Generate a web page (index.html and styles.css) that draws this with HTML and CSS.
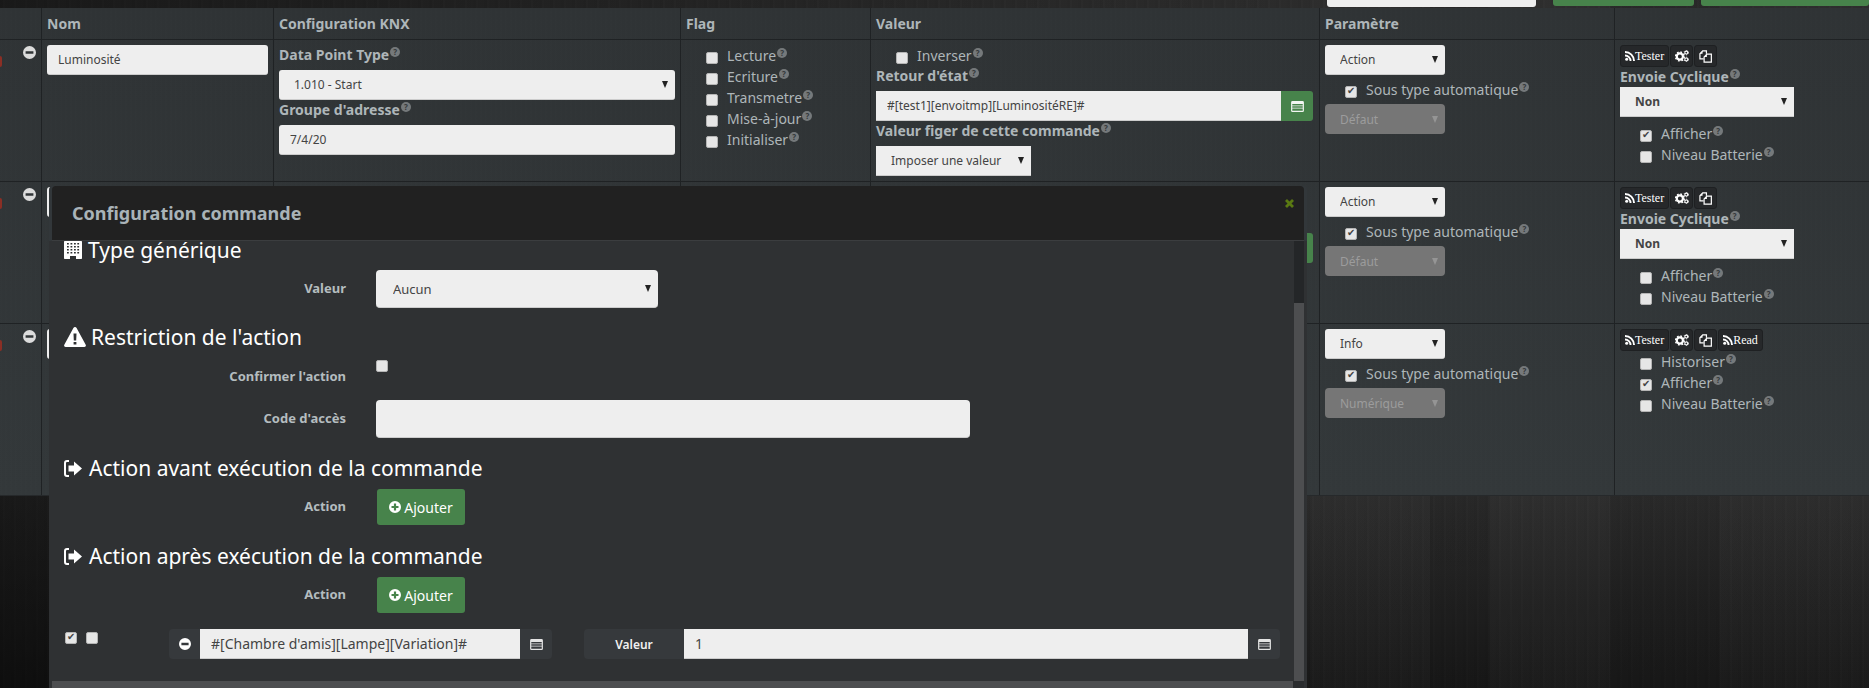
FILE: index.html
```html
<!DOCTYPE html>
<html lang="fr">
<head>
<meta charset="utf-8">
<title>Configuration commande</title>
<link rel="stylesheet" href="styles.css">
</head>
<body>
<svg class="sprite" xmlns="http://www.w3.org/2000/svg">
  <symbol id="i-minus" viewBox="0 0 12 12"><path fill-rule="evenodd" d="M6 0a6 6 0 1 0 0 12A6 6 0 0 0 6 0zM2.4 4.8h7.2v2.4H2.4z"/></symbol>
  <symbol id="i-plus" viewBox="0 0 12 12"><path fill-rule="evenodd" d="M6 0a6 6 0 1 0 0 12A6 6 0 0 0 6 0zM4.9 2.5h2.2v2.4h2.4v2.2H7.100v2.400H4.900V7.100H2.500V4.900h2.400z"/></symbol>
  <symbol id="i-list" viewBox="0 0 14 12"><path fill-rule="evenodd" d="M1.500 0h11A1.500 1.500 0 0 1 14 1.500v9a1.500 1.500 0 0 1-1.500 1.500h-11A1.500 1.500 0 0 1 0 10.500v-9A1.500 1.500 0 0 1 1.500 0zM1.300 3.200v1.600h11.400V3.200zM1.300 5.800v1.500h11.400V5.800zM1.300 8.300v2.200h11.400V8.300z"/></symbol>
  <symbol id="i-rss" viewBox="0 0 12 12"><circle cx="2" cy="10" r="1.800"/><path d="M0 4.200v2.300a5.500 5.500 0 0 1 5.500 5.500h2.300A7.800 7.800 0 0 0 0 4.200z"/><path d="M0 0v2.300A9.700 9.700 0 0 1 9.700 12H12A12 12 0 0 0 0 0z"/></symbol>
  <symbol id="i-cogs" viewBox="0 0 16 14"><circle cx="5.500" cy="7.500" r="3.600" fill="none" stroke="currentColor" stroke-width="2.600"/><circle cx="5.500" cy="7.500" r="5.200" fill="none" stroke="currentColor" stroke-width="1.700" stroke-dasharray="2 2.080"/><circle cx="13" cy="3" r="1.700" fill="none" stroke="currentColor" stroke-width="1.300"/><circle cx="13" cy="3" r="2.600" fill="none" stroke="currentColor" stroke-width="1" stroke-dasharray="1.300 1.420"/><circle cx="13" cy="11" r="1.700" fill="none" stroke="currentColor" stroke-width="1.300"/><circle cx="13" cy="11" r="2.600" fill="none" stroke="currentColor" stroke-width="1" stroke-dasharray="1.300 1.420"/></symbol>
  <symbol id="i-copy" viewBox="0 0 14 14"><path fill="none" stroke="currentColor" stroke-width="1.300" d="M5 9.500H1V4l3-3h4v3"/><path fill="none" stroke="currentColor" stroke-width="1.300" d="M5.500 13V7.500l3-3h4.800V13z"/><path fill="currentColor" d="M3.800 1v3H1zM8.500 4.500v3h-3z"/></symbol>
  <symbol id="i-warning" viewBox="0 0 22 20"><path fill-rule="evenodd" d="M11 0c.7 0 1.200.4 1.600 1l9.100 16.800c.6 1.100-.1 2.200-1.300 2.200H1.600C.4 20-.3 18.900.3 17.800L9.400 1C9.800.4 10.300 0 11 0zM9.500 6.500l.3 7h2.400l.3-7zM9.600 15v2.500h2.800V15z"/></symbol>
  <symbol id="i-building" viewBox="0 0 18 18"><path fill-rule="evenodd" d="M.7 0h16.600a.7.7 0 0 1 .7.700v16.600a.7.7 0 0 1-.7.700H12v-3H6v3H.7a.7.7 0 0 1-.7-.7V.7A.7.7 0 0 1 .7 0zM3 2v1.600h1.800V2zM6.500 2v1.600h1.800V2zM10 2v1.600h1.800V2zM13.300 2v1.600h1.800V2zM3 5v1.600h1.800V5zM6.500 5v1.600h1.800V5zM10 5v1.600h1.800V5zM13.300 5v1.600h1.800V5zM3 8v1.600h1.800V8zM6.500 8v1.600h1.800V8zM10 8v1.600h1.800V8zM13.300 8v1.600h1.800V8zM3 11v1.600h1.800V11zM6.500 11v1.600h1.800V11zM10 11v1.600h1.800V11zM13.300 11v1.600h1.800V11z"/></symbol>
  <symbol id="i-signin" viewBox="0 0 18 17"><path d="M5 0v2H3a1 1 0 0 0-1 1v11a1 1 0 0 0 1 1h2v2H3a3 3 0 0 1-3-3V3a3 3 0 0 1 3-3z"/><path d="M10 1.500l8 7-8 7v-4H4.500v-6H10z"/></symbol>
  <symbol id="i-times" viewBox="0 0 10 10"><path d="M2.200 0L5 2.800 7.800 0 10 2.200 7.200 5 10 7.800 7.800 10 5 7.200 2.200 10 0 7.800 2.800 5 0 2.200z"/></symbol>
</svg>

<div class="topstrip">
  <input class="top-input" type="text" aria-label="Recherche">
  <span class="top-btn top-btn-a"></span>
  <span class="top-btn top-btn-b"></span>
</div>

<div class="cmd-table">
  <div class="row head">
    <div class="cell"></div>
    <div class="cell">Nom</div>
    <div class="cell">Configuration KNX</div>
    <div class="cell">Flag</div>
    <div class="cell">Valeur</div>
    <div class="cell">Paramètre</div>
    <div class="cell"></div>
  </div>

  <div class="row row-std">
    <div class="cell cell-ctl"><span class="grip"></span><svg class="ic-remove"><use href="#i-minus"/></svg></div>
    <div class="cell"><input class="field" type="text" value="Luminosité"></div>
    <div class="cell">
      <div class="lbl">Data Point Type<i class="help">?</i></div>
      <select class="field"><option>1.010 - Start</option></select>
      <div class="lbl lbl-next">Groupe d'adresse<i class="help">?</i></div>
      <input class="field" type="text" value="7/4/20">
    </div>
    <div class="cell">
      <label class="check"><input type="checkbox"><span>Lecture<i class="help">?</i></span></label>
      <label class="check"><input type="checkbox"><span>Ecriture<i class="help">?</i></span></label>
      <label class="check"><input type="checkbox"><span>Transmetre<i class="help">?</i></span></label>
      <label class="check"><input type="checkbox"><span>Mise-à-jour<i class="help">?</i></span></label>
      <label class="check"><input type="checkbox"><span>Initialiser<i class="help">?</i></span></label>
    </div>
    <div class="cell">
      <label class="check"><input type="checkbox"><span>Inverser<i class="help">?</i></span></label>
      <div class="lbl lbl-tight">Retour d'état<i class="help">?</i></div>
      <div class="cmd-group">
        <input class="field square" type="text" value="#[test1][envoitmp][LuminositéRE]#">
        <button class="btn-green-addon" type="button"><svg class="ic-list"><use href="#i-list"/></svg></button>
      </div>
      <div class="lbl lbl-tight">Valeur figer de cette commande<i class="help">?</i></div>
      <select class="field square w-figer"><option>Imposer une valeur</option></select>
    </div>
    <div class="cell">
      <select class="field w-param"><option>Action</option></select>
      <label class="check check-param"><input type="checkbox" checked><span>Sous type automatique<i class="help">?</i></span></label>
      <select class="field w-param off" disabled><option>Défaut</option></select>
    </div>
    <div class="cell">
      <div class="tools">
        <span class="tool"><svg class="ic-rss"><use href="#i-rss"/></svg>Tester</span>
        <span class="tool tool-ic"><svg class="ic-cogs"><use href="#i-cogs"/></svg></span>
        <span class="tool tool-ic"><svg class="ic-copy"><use href="#i-copy"/></svg></span>
      </div>
      <div class="lbl">Envoie Cyclique<i class="help">?</i></div>
      <select class="field square w-cycle"><option>Non</option></select>
      <div class="checks-after">
        <label class="check"><input type="checkbox" checked><span>Afficher<i class="help">?</i></span></label>
        <label class="check"><input type="checkbox"><span>Niveau Batterie<i class="help">?</i></span></label>
      </div>
    </div>
  </div>

  <div class="row row-std">
    <div class="cell cell-ctl"><span class="grip"></span><svg class="ic-remove"><use href="#i-minus"/></svg></div>
    <div class="cell"><input class="field" type="text" aria-label="Nom"></div>
    <div class="cell"></div>
    <div class="cell"></div>
    <div class="cell cell-valeur-under">
      <div class="cmd-group">
        <input class="field square" type="text" aria-label="Retour">
        <button class="btn-green-addon" type="button"></button>
      </div>
    </div>
    <div class="cell">
      <select class="field w-param"><option>Action</option></select>
      <label class="check check-param"><input type="checkbox" checked><span>Sous type automatique<i class="help">?</i></span></label>
      <select class="field w-param off" disabled><option>Défaut</option></select>
    </div>
    <div class="cell">
      <div class="tools">
        <span class="tool"><svg class="ic-rss"><use href="#i-rss"/></svg>Tester</span>
        <span class="tool tool-ic"><svg class="ic-cogs"><use href="#i-cogs"/></svg></span>
        <span class="tool tool-ic"><svg class="ic-copy"><use href="#i-copy"/></svg></span>
      </div>
      <div class="lbl">Envoie Cyclique<i class="help">?</i></div>
      <select class="field square w-cycle"><option>Non</option></select>
      <div class="checks-after">
        <label class="check"><input type="checkbox"><span>Afficher<i class="help">?</i></span></label>
        <label class="check"><input type="checkbox"><span>Niveau Batterie<i class="help">?</i></span></label>
      </div>
    </div>
  </div>

  <div class="row row-tall">
    <div class="cell cell-ctl"><span class="grip"></span><svg class="ic-remove"><use href="#i-minus"/></svg></div>
    <div class="cell"><input class="field" type="text" aria-label="Nom"></div>
    <div class="cell"></div>
    <div class="cell"></div>
    <div class="cell"></div>
    <div class="cell">
      <select class="field w-param"><option>Info</option></select>
      <label class="check check-param"><input type="checkbox" checked><span>Sous type automatique<i class="help">?</i></span></label>
      <select class="field w-param off" disabled><option>Numérique</option></select>
    </div>
    <div class="cell">
      <div class="tools">
        <span class="tool"><svg class="ic-rss"><use href="#i-rss"/></svg>Tester</span>
        <span class="tool tool-ic"><svg class="ic-cogs"><use href="#i-cogs"/></svg></span>
        <span class="tool tool-ic"><svg class="ic-copy"><use href="#i-copy"/></svg></span>
        <span class="tool"><svg class="ic-rss"><use href="#i-rss"/></svg>Read</span>
      </div>
      <label class="check"><input type="checkbox"><span>Historiser<i class="help">?</i></span></label>
      <label class="check"><input type="checkbox" checked><span>Afficher<i class="help">?</i></span></label>
      <label class="check"><input type="checkbox"><span>Niveau Batterie<i class="help">?</i></span></label>
    </div>
  </div>
</div>

<div class="modal">
  <div class="modal-head">
    <span class="modal-title">Configuration commande</span>
    <svg class="ic-close"><use href="#i-times"/></svg>
  </div>
  <div class="modal-body">
    <div class="modal-scroll">
      <section class="section section-first">
        <h3><svg class="ic-building"><use href="#i-building"/></svg>Type générique</h3>
        <div class="form-row">
          <span class="form-label">Valeur</span>
          <select class="field field-lg w-generic"><option>Aucun</option></select>
        </div>
      </section>
      <section class="section">
        <h3><svg class="ic-warning"><use href="#i-warning"/></svg>Restriction de l'action</h3>
        <div class="form-row form-row-check">
          <span class="form-label">Confirmer l'action</span>
          <input class="plain-check" type="checkbox" aria-label="Confirmer l'action">
        </div>
        <div class="form-row">
          <span class="form-label">Code d'accès</span>
          <input class="field field-lg w-code" type="text" aria-label="Code d'accès">
        </div>
      </section>
      <section class="section">
        <h3><svg class="ic-signin"><use href="#i-signin"/></svg>Action avant exécution de la commande</h3>
        <div class="form-row form-row-btn">
          <span class="form-label">Action</span>
          <button class="btn-add" type="button"><svg class="ic-plus"><use href="#i-plus"/></svg>Ajouter</button>
        </div>
      </section>
      <section class="section section-last">
        <h3><svg class="ic-signin"><use href="#i-signin"/></svg>Action après exécution de la commande</h3>
        <div class="form-row form-row-btn">
          <span class="form-label">Action</span>
          <button class="btn-add" type="button"><svg class="ic-plus"><use href="#i-plus"/></svg>Ajouter</button>
        </div>
      </section>
      <div class="action-line">
        <div class="action-checks">
          <input class="plain-check" type="checkbox" checked aria-label="Actif">
          <input class="plain-check" type="checkbox" aria-label="Parallèle">
        </div>
        <div class="group group-cmd">
          <span class="addon addon-ic"><svg class="ic-minus-w"><use href="#i-minus"/></svg></span>
          <input class="field square grow" type="text" value="#[Chambre d'amis][Lampe][Variation]#">
          <span class="addon addon-ic"><svg class="ic-list ic-list-w"><use href="#i-list"/></svg></span>
        </div>
        <div class="group group-val">
          <span class="addon addon-text">Valeur</span>
          <input class="field square grow" type="text" value="1">
          <span class="addon addon-ic"><svg class="ic-list ic-list-w"><use href="#i-list"/></svg></span>
        </div>
      </div>
    </div>
    <div class="vbar"><div class="vthumb"></div></div>
    <div class="hbar"></div>
    <div class="corner"></div>
  </div>
</div>
</body>
</html>
```
FILE: styles.css
```css
* { box-sizing: border-box; }
html, body { height: 100%; }
body {
  margin: 0;
  height: 688px;
  overflow: hidden;
  position: relative;
  font-family: "Noto Sans", "Open Sans", sans-serif;
  font-size: 14px;
  color: #aeb6b9;
  background-color: #1a1a1a;
  background-image:
    linear-gradient(90deg, rgba(0,0,0,.42) 0, rgba(0,0,0,.4) 60px, rgba(0,0,0,0) 1300px),
    linear-gradient(90deg, rgba(0,0,0,0) 0 1310px, rgba(255,255,255,.012) 1310px 1430px, rgba(0,0,0,.07) 1430px 1490px, rgba(255,255,255,.015) 1490px 1610px, rgba(0,0,0,.06) 1610px 1720px, rgba(255,255,255,.01) 1720px 1869px),
    repeating-linear-gradient(90deg, rgba(0,0,0,.04) 0 3px, rgba(255,255,255,.006) 3px 5px, rgba(0,0,0,.015) 5px 11px),
    linear-gradient(180deg, #2c2c2c 0, #2c2c2c 496px, #181818 688px);
}
.sprite { position: absolute; width: 0; height: 0; }
svg { fill: currentColor; }

/* top strip */
.topstrip {
  height: 8px;
  display: flex;
  justify-content: flex-end;
  align-items: flex-start;
  gap: 7px;
  overflow: hidden;
}
.top-input {
  width: 209px;
  height: 7px;
  margin-right: 10px;
  border: 0;
  background: #eee;
  border-radius: 0 0 3px 3px;
}
.top-btn { height: 6px; background: #47834b; border-radius: 0 0 3px 3px; }
.top-btn-a { width: 141px; }
.top-btn-b { width: 168px; }

/* table */
.cmd-table {
  background-color: #32373a;
  background-image:
    repeating-linear-gradient(90deg, rgba(255,255,255,.004) 0 2px, rgba(0,0,0,.008) 2px 5px),
    linear-gradient(180deg, #2f3335 0, #33383a 100%);
}
.row {
  display: grid;
  grid-template-columns: 41px 232px 407px 190px 449px 295px 255px;
  border-bottom: 1px solid #1f2224;
}
.head { height: 32px; }
.row-std { height: 142px; }
.row-tall { height: 172px; border-bottom-color: #26292b; }
.cell {
  padding: 5px;
  border-left: 1px solid #1f2224;
  min-width: 0;
}
.cell:first-child { border-left: 0; }
.head .cell { font-weight: 700; line-height: 21px; }
.cell-ctl {
  display: flex;
  justify-content: space-between;
  padding: 6px 5px 0 0;
}
.grip {
  width: 2px;
  height: 11px;
  margin-top: 10px;
  background: #8b2f25;
  border-radius: 0 2px 2px 0;
}
.ic-remove { width: 13px; height: 13px; color: #dcdcdc; }
.cell-valeur-under { padding-top: 51px; }

/* form controls */
.field {
  display: block;
  width: 100%;
  height: 30px;
  padding: 0 11px;
  border: 0;
  border-bottom: 1px solid #ccc;
  border-radius: 3px;
  background: #eee;
  color: #444;
  font: 12px "Noto Sans", "Open Sans", sans-serif;
}
select.field {
  appearance: none;
  padding: 0 15px;
  background-image: url("data:image/svg+xml,%3Csvg xmlns='http://www.w3.org/2000/svg' width='6' height='7'%3E%3Cpath d='M0 0h6L3 7z' fill='%23222'/%3E%3C/svg%3E");
  background-repeat: no-repeat;
  background-position: right 7px center;
}
.square { border-radius: 0; }
select.off {
  background-color: #767676;
  background-image: url("data:image/svg+xml,%3Csvg xmlns='http://www.w3.org/2000/svg' width='6' height='7'%3E%3Cpath d='M0 0h6L3 7z' fill='%23959595'/%3E%3C/svg%3E");
  color: #9c9c9c;
  border-bottom: 0;
  opacity: 1;
  border-radius: 4px;
}
.w-param { width: 120px; }
.w-figer { width: 155px; }
.w-cycle { width: 174px; font-weight: 700; }
.lbl { font-weight: 700; line-height: 20px; height: 20px; }
.cell > .lbl:first-child { margin-bottom: 5px; }
.lbl-next { margin: 0 0 5px; }
.lbl-tight { margin-bottom: 5px; }
.help {
  display: inline-block;
  width: 10px;
  height: 10px;
  margin-left: 1px;
  border-radius: 50%;
  background: #75797b;
  color: #34383a;
  font: 700 8px/10px "Noto Sans", sans-serif;
  text-align: center;
  vertical-align: 5px;
}
.check {
  display: flex;
  align-items: flex-start;
  gap: 9px;
  height: 21px;
  padding-left: 20px;
  line-height: 21px;
  font-weight: 400;
}
input[type=checkbox] {
  appearance: none;
  flex: none;
  width: 12px;
  height: 12px;
  margin: 7px 0 0;
  position: relative;
  background: #e6e6e6;
  border: 1px solid #b5b5b5;
  border-radius: 2px;
}
input[type=checkbox]:checked::after {
  content: "✔";
  position: absolute;
  left: 1px;
  top: -3px;
  font: 10px/14px "DejaVu Sans", sans-serif;
  color: #444;
}
.check-param { margin-top: 4px; margin-bottom: 4px; }
.checks-after { margin-top: 6px; }

/* value group */
.cmd-group { display: flex; margin-bottom: 0; width: 437px; }
.cmd-group .field { flex: 1; }
.btn-green-addon {
  width: 32px;
  height: 30px;
  padding: 0;
  border: 0;
  border-radius: 0 3px 3px 0;
  background: #47834b;
  color: #f2f5f2;
  display: flex;
  align-items: center;
  justify-content: center;
}
.ic-list { width: 13px; height: 11px; }

/* tools */
.tools { display: flex; gap: 1px; height: 22px; }
.tool {
  display: flex;
  align-items: center;
  justify-content: center;
  height: 22px;
  padding: 0 4px;
  background: #26282a;
  border: 1px solid #1e2022;
  border-radius: 3px;
  color: #fff;
  font: 12px/1 "Liberation Serif", serif;
}
.tool-ic { width: 23px; padding: 0; }
.ic-rss { width: 10px; height: 10px; }
.ic-cogs { width: 14px; height: 12px; }
.ic-copy { width: 13px; height: 13px; }

/* modal */
.modal {
  position: absolute;
  left: 49px;
  top: 186px;
  width: 1258px;
  height: 502px;
  display: flex;
  flex-direction: column;
}
.modal-head {
  flex: none;
  height: 55px;
  margin: 0 3px;
  background: #212121;
  border-bottom: 1px solid #3b3d3f;
  border-radius: 4px 4px 0 0;
  box-shadow: -3px 0 0 #32373a, 3px 0 0 #32373a;
  display: flex;
  align-items: center;
  justify-content: space-between;
  padding: 0 10px 0 20px;
}
.modal-title { font-size: 18px; line-height: 24px; font-weight: 700; color: #a9b3b8; }
.ic-close { width: 9px; height: 9px; color: #5a7a12; margin-top: -20px; }
.modal-body {
  position: relative;
  flex: 1;
  overflow: hidden;
  background: #2f3133;
}
.modal-scroll { padding: 0 0 0 15px; }
h3 {
  display: flex;
  align-items: center;
  height: 20px;
  margin: 0 0 10px;
  padding-bottom: 2px;
  color: #fff;
  font-size: 21px;
  font-weight: 400;
  line-height: 20px;
}
.ic-building { width: 18px; height: 18px; margin-right: 6px; }
.ic-warning { width: 22px; height: 20px; margin-right: 5px; }
.ic-signin { width: 18px; height: 17px; margin-right: 7px; }
.section { margin-bottom: 21px; }
.section-first { margin-bottom: 20px; }
.section-first h3 { margin-bottom: 9px; }
.section-last { margin-bottom: 15px; }
.form-row {
  display: grid;
  grid-template-columns: 282px 1fr;
  column-gap: 30px;
  height: 38px;
}
.form-row-check { height: 41px; margin-top: 11px; }
.form-row-btn { height: 37px; }
.form-label {
  padding-top: 9px;
  font-size: 13px;
  font-weight: 700;
  line-height: 18px;
  text-align: right;
  color: #b4bcbf;
}
.form-row-check .form-label { padding-top: 8px; }
.form-row-btn .form-label { padding-top: 8px; }
.field-lg { height: 38px; border-radius: 4px; font-size: 13px; }
select.field-lg { padding: 0 17px; }
.w-generic { width: 282px; }
.w-code { width: 594px; }
.plain-check { margin-top: 1px !important; }
.btn-add {
  width: 88px;
  height: 36px;
  padding: 0;
  margin-left: 1px;
  border: 0;
  border-radius: 3px;
  background: #47834b;
  color: #fff;
  font: 14px "Noto Sans", sans-serif;
  display: flex;
  align-items: center;
  justify-content: center;
  gap: 3px;
}
.ic-plus { width: 12px; height: 12px; }
.action-line { display: flex; align-items: flex-start; }
.action-checks { display: flex; gap: 9px; width: 105px; padding: 2px 0 0 1px; }
.group { display: flex; height: 30px; }
.group-cmd { width: 383px; margin-right: 32px; }
.group-val { width: 696px; }
.addon {
  flex: none;
  display: flex;
  align-items: center;
  justify-content: center;
  background: #36393c;
  color: #f0f0f0;
  border-radius: 4px 0 0 4px;
  font-size: 12px;
  font-weight: 600;
}
.addon-ic { width: 31px; }
.addon-ic:last-child { width: 32px; border-radius: 0 4px 4px 0; }
.addon-text { width: 100px; }
.grow { flex: 1; width: auto; min-width: 0; font-size: 14px; }
.ic-minus-w { width: 12px; height: 12px; color: #fff; }
.ic-list-w { color: #e4e4e4; }
.vbar {
  position: absolute;
  right: 3px;
  top: 0;
  bottom: 0;
  width: 10px;
  background: #242628;
}
.vthumb { position: absolute; left: 0; right: 0; top: 62px; bottom: 0; background: #4d4e50; }
.hbar {
  position: absolute;
  left: 3px;
  right: 14px;
  bottom: 0;
  height: 7px;
  background: #4d4e50;
}
.corner {
  position: absolute;
  right: 3px;
  bottom: 0;
  width: 11px;
  height: 7px;
  background: #2a2c2e;
}
```
